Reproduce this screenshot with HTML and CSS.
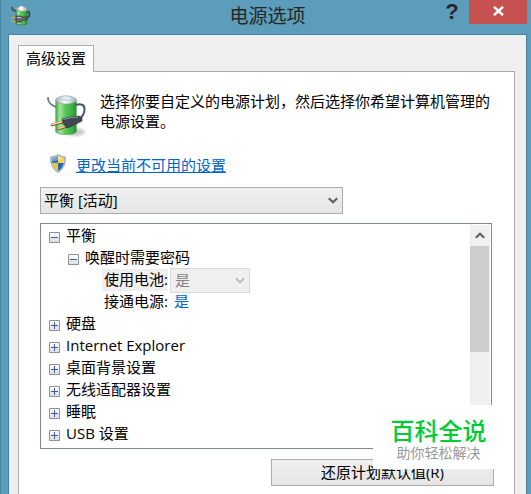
FILE: index.html
```html
<!DOCTYPE html>
<html lang="zh-CN">
<head>
<meta charset="utf-8">
<title>电源选项</title>
<link rel="stylesheet" href="styles.css">
</head>
<body>
<svg class="defs" aria-hidden="true">
  <defs>
    <linearGradient id="green" x1="0" x2="1">
      <stop offset="0" stop-color="#4aa44e"/><stop offset=".2" stop-color="#a0e79b"/>
      <stop offset=".45" stop-color="#5bc95a"/><stop offset=".8" stop-color="#3bb041"/><stop offset="1" stop-color="#258a2e"/>
    </linearGradient>
    <linearGradient id="cap" x1="0" x2="1">
      <stop offset="0" stop-color="#9fabb0"/><stop offset=".45" stop-color="#ffffff"/><stop offset="1" stop-color="#9fabb0"/>
    </linearGradient>
    <linearGradient id="box" x1="0" y1="0" x2="0" y2="1">
      <stop offset="0" stop-color="#ffffff"/><stop offset="1" stop-color="#dcdcdc"/>
    </linearGradient>
    <filter id="soft"><feGaussianBlur stdDeviation="1.5"/></filter>
  </defs>
  <symbol id="minus" viewBox="0 0 11 11"><path fill="url(#box)" stroke="#919191" d="M.5.5h10v10H.5z"/><path stroke="#3f5aa8" d="M2 5.500h7"/></symbol>
  <symbol id="plus" viewBox="0 0 11 11"><path fill="url(#box)" stroke="#919191" d="M.5.5h10v10H.5z"/><path stroke="#3f5aa8" d="M2 5.500h7M5.500 2v7"/></symbol>
  <symbol id="chevron" viewBox="0 0 10 7"><path fill="none" stroke="currentColor" stroke-width="2.200" d="M.8 1.200 5 5.300l4.200-4.100"/></symbol>
</svg>

<main class="dialog">
  <header class="titlebar">
    <svg class="app-icon" viewBox="0 0 20 20" aria-hidden="true">
      <path fill="none" stroke="#46505a" stroke-width="1.800" d="M1 1c0 2 1 4 4 4"/>
      <path fill="none" stroke="#3c4650" stroke-width="1.800" d="M15 6c2-1 3.500 0 3.500 2 0 3-1 3-4 4"/>
      <path fill="url(#green)" stroke="#237a32" stroke-width=".6" d="M5 4h11v14q-5 2-11 0z"/>
      <path fill="url(#cap)" stroke="#7a8a94" stroke-width=".5" d="M5 4V2q1-1 3-1l1-1h3l1 1q2 0 3 1v3q-5 1-11-1z"/>
      <path stroke="#e8a51c" stroke-width="1.300" d="M0 11.500h5M0 15.500h5"/>
      <path fill="#666c72" stroke="#22282c" stroke-width=".7" d="M5 10h5l1 1h5v3h-4l-2 2H5z"/>
      <path stroke="#c5cbd0" d="M6 11.500h4"/>
    </svg>
    <h1 class="title">电源选项</h1>
    <div class="window-buttons">
      <button class="help" type="button" aria-label="帮助">?</button>
      <button class="close" type="button" aria-label="关闭">
        <svg viewBox="0 0 11 10" aria-hidden="true"><path stroke="#fff" stroke-width="2.400" d="m1 .8 9 8.400M10 .8 1 9.200"/></svg>
      </button>
    </div>
  </header>

  <div class="client">
    <div class="tabs" role="tablist">
      <button class="tab" type="button" role="tab" aria-selected="true">高级设置</button>
    </div>
    <section class="panel" role="tabpanel">
      <div class="intro">
        <svg class="battery" viewBox="0 0 42 44" aria-hidden="true">
          <ellipse cx="29" cy="38" rx="10" ry="4" fill="#8c948c" opacity=".5" filter="url(#soft)"/>
          <path fill="none" stroke="#66768a" stroke-width="1.800" stroke-linecap="round" d="M2 4c0 5 3 7 8 9"/>
          <path fill="url(#green)" stroke="#3a9242" stroke-width=".5" d="M9.700 6h20.600v32q-2 2.500-10.300 2.500T9.700 38z"/>
          <ellipse cx="20" cy="6" rx="10.400" ry="4" fill="url(#cap)" stroke="#8fa3a6" stroke-width=".6"/>
          <ellipse cx="20" cy="4.200" rx="5.500" ry="2.400" fill="#dce9f0" stroke="#9db0ba" stroke-width=".5"/>
          <path fill="none" stroke="#45546c" stroke-width="2" d="M30 11c5-2 8.500 0 8.500 4 0 5-2 7-5 10"/>
          <path stroke="#76501e" stroke-width="2.600" stroke-linecap="round" d="m6 31 11-3m-4 7 8-3"/>
          <path stroke="#f4d5a4" stroke-width="1.500" stroke-linecap="round" d="m6 30.500 11-3m-4 7 8-3"/>
          <path fill="#414854" stroke="#262b34" stroke-width=".6" d="m16 25 8-2 9-1 3 2v3l-8 4-6 3q-5-2-6-9z"/>
          <path fill="none" stroke="#9aa4b2" stroke-width=".9" d="m17 25.500 8-2 7-.5"/>
        </svg>
        <p>选择你要自定义的电源计划，然后选择你希望计算机管理的电源设置。</p>
      </div>

      <div class="unlock">
        <svg class="shield" viewBox="0 0 16 19" aria-hidden="true">
          <path fill="#b9c4cc" stroke="#8996a0" stroke-width=".7" d="M8 .5q3 2 7.500 2.500Q16 14 8 18.500 0 14 .5 3 5 2.500 8 .5z"/>
          <path fill="#2d73c5" d="M8 2Q5 4 2 4.200 1.700 7 2.200 9H8z"/>
          <path fill="#f8d348" d="M8 2q3 2 6 2.200.3 2.800-.2 4.800H8z"/>
          <path fill="#f3c52f" d="M2.200 9H8v8Q3.400 14 2.200 9z"/>
          <path fill="#2467b5" d="M13.800 9H8v8q4.600-3 5.800-8z"/>
          <path fill="#fff" opacity=".3" d="M8 2Q5 4 2 4.200l.2 3Q7 7 14 4.200 11 4 8 2z"/>
        </svg>
        <a href="#settings">更改当前不可用的设置</a>
      </div>

      <div class="combo plan">
        <select aria-label="电源计划"><option>平衡 [活动]</option></select>
        <svg class="arrow" aria-hidden="true"><use href="#chevron"/></svg>
      </div>

      <div class="settings" id="settings">
        <ul class="tree">
          <li>
            <div class="row"><button type="button" class="toggle" aria-label="折叠"><svg><use href="#minus"/></svg></button><span>平衡</span></div>
            <ul>
              <li>
                <div class="row"><button type="button" class="toggle" aria-label="折叠"><svg><use href="#minus"/></svg></button><span>唤醒时需要密码</span></div>
                <ul class="values">
                  <li class="row">
                    <label class="name selected" for="battery">使用电池:</label>
                    <div class="combo value">
                      <select id="battery" disabled><option>是</option></select>
                      <svg class="arrow" aria-hidden="true"><use href="#chevron"/></svg>
                    </div>
                  </li>
                  <li class="row"><span class="name">接通电源:</span><a class="choice" href="#settings">是</a></li>
                </ul>
              </li>
            </ul>
          </li>
          <li class="row"><button type="button" class="toggle" aria-label="展开"><svg><use href="#plus"/></svg></button><span>硬盘</span></li>
          <li class="row"><button type="button" class="toggle" aria-label="展开"><svg><use href="#plus"/></svg></button><span>Internet Explorer</span></li>
          <li class="row"><button type="button" class="toggle" aria-label="展开"><svg><use href="#plus"/></svg></button><span>桌面背景设置</span></li>
          <li class="row"><button type="button" class="toggle" aria-label="展开"><svg><use href="#plus"/></svg></button><span>无线适配器设置</span></li>
          <li class="row"><button type="button" class="toggle" aria-label="展开"><svg><use href="#plus"/></svg></button><span>睡眠</span></li>
          <li class="row"><button type="button" class="toggle" aria-label="展开"><svg><use href="#plus"/></svg></button><span>USB 设置</span></li>
        </ul>
        <div class="scrollbar">
          <button type="button" class="scroll-up" aria-label="向上滚动"><svg><use href="#chevron"/></svg></button>
          <div class="thumb"></div>
        </div>
      </div>

      <div class="actions">
        <button type="button" class="restore">还原计划默认值(R)</button>
        <aside class="watermark">
          <strong>百科全说</strong>
          <span>助你轻松解决</span>
        </aside>
      </div>
    </section>
  </div>
</main>
</body>
</html>
```

FILE: styles.css
```css
* {
  box-sizing: border-box;
}

body {
  margin: 0;
  overflow: hidden;
  color: #000;
  font: 15px/20px "Open Sans", "Noto Sans CJK SC", sans-serif;
}

button,
select {
  margin: 0;
  padding: 0;
  border: 0;
  border-radius: 0;
  background: none;
  color: inherit;
  font: inherit;
}

ul,
p,
h1 {
  margin: 0;
  padding: 0;
  list-style: none;
}

svg {
  display: block;
}

.defs {
  position: absolute;
  width: 0;
  height: 0;
}

.dialog {
  display: flex;
  flex-direction: column;
  height: 100vh;
  padding: 0 4px 0 7px;
  border-left: 1px solid #4687a5;
  background: #5b9dbb;
}

.titlebar {
  display: grid;
  flex: none;
  grid-template-columns: 1fr auto 1fr;
  height: 34px;
}

.app-icon {
  width: 20px;
  height: 20px;
  margin: 6px 0 0 3px;
}

.title {
  color: #262626;
  font-size: 19px;
  font-weight: 400;
  line-height: 32px;
}

.window-buttons {
  display: flex;
  justify-content: flex-end;
  align-items: flex-start;
  gap: 8px;
}

.help {
  width: 18px;
  color: #262626;
  font: 700 22px/24px "Liberation Sans", sans-serif;
}

.close {
  display: grid;
  place-items: center;
  width: 58px;
  height: 24px;
  padding-bottom: 2px;
  background: #c75050;
}

.close svg {
  width: 11px;
  height: 10px;
}

.client {
  display: flex;
  flex: 1;
  flex-direction: column;
  min-height: 0;
  padding: 10px 11px 0 9px;
  border: 1px solid #4284a0;
  border-bottom: 0;
  background: #efefef;
}

.tabs {
  display: flex;
  flex: none;
}

.tab {
  z-index: 1;
  height: 27px;
  margin-bottom: -1px;
  padding: 0 7px 3px;
  border: 1px solid #acacac;
  border-bottom: 0;
  background: #fff;
}

.panel {
  flex: 1;
  min-height: 0;
  padding: 19px 22px 0 21px;
  border: 1px solid #acacac;
  border-bottom: 0;
  background: #fff;
}

.intro {
  display: flex;
  gap: 12px;
  margin-right: -2px;
  padding-left: 6px;
}

.intro p {
  flex: 1;
}

.battery {
  width: 42px;
  height: 44px;
  margin-top: 3px;
}

.unlock {
  display: flex;
  align-items: center;
  gap: 10px;
  margin-top: 16px;
  padding-left: 10px;
}

.unlock a {
  padding-bottom: 3px;
}

.shield {
  width: 16px;
  height: 19px;
  margin-bottom: 5px;
}

a {
  color: #0066cc;
}

.combo {
  display: grid;
  align-items: center;
}

.combo > * {
  grid-area: 1 / 1;
}

.combo select {
  width: 100%;
  height: 100%;
  padding-bottom: 1px;
  appearance: none;
  border: 1px solid #acacac;
  background: linear-gradient(#f0f0f0, #e5e5e5);
}

.arrow {
  justify-self: end;
  width: 10px;
  height: 7px;
  margin-right: 5px;
  color: #606060;
  pointer-events: none;
}

.plan {
  width: 67%;
  height: 27px;
  margin-top: 9px;
}

.plan select {
  padding-left: 3px;
}

.settings {
  display: flex;
  justify-content: space-between;
  margin-top: 9px;
  padding: 1px;
  border: 1px solid #828790;
}

.tree {
  padding: 0 0 2px 7px;
}

.tree ul {
  padding-left: 19px;
}

.tree .values {
  padding-left: 34px;
}

.row {
  display: flex;
  align-items: center;
  height: 22px;
  padding-bottom: 2px;
}

.values .row {
  padding-bottom: 0;
}

.toggle {
  margin-right: 6px;
  padding-top: 5px;
}

.toggle svg {
  width: 11px;
  height: 11px;
}

.name {
  padding: 0 0 2px 2px;
}

.selected {
  background: #efefef;
}

.value {
  width: 80px;
  height: 25px;
  margin-left: 2px;
}

.value select {
  padding-left: 4px;
  border-color: #d9d9d9;
  background: #efefef;
  color: #838383;
  opacity: 1;
}

.value .arrow {
  color: #bfbfbf;
}

.choice {
  margin-left: 6px;
  padding-bottom: 2px;
  text-decoration: none;
}

.scrollbar {
  width: 20px;
  background: #f0f0f0;
}

.scroll-up {
  display: grid;
  place-items: center;
  width: 19px;
  height: 21px;
  color: #606060;
}

.scroll-up svg {
  width: 10px;
  height: 7px;
  transform: rotate(180deg);
}

.thumb {
  width: 19px;
  height: 106px;
  background: #cdcdcd;
}

.actions {
  position: relative;
  display: flex;
  justify-content: flex-end;
  margin: 10px -2px 0 0;
}

.restore {
  width: 223px;
  height: 27px;
  padding-bottom: 2px;
  border: 1px solid #acacac;
  background: linear-gradient(#f0f0f0, #e5e5e5);
}

.watermark {
  position: absolute;
  right: -10px;
  bottom: 17px;
  display: flex;
  flex-direction: column;
  align-items: center;
  width: 131px;
  height: 64px;
  padding-top: 12px;
  background: #fff;
  color: #999;
  font: 14px/18px "Noto Sans CJK SC", sans-serif;
}

.watermark strong {
  color: #0c3;
  font-size: 24px;
  font-weight: 500;
  line-height: 26px;
}
```
